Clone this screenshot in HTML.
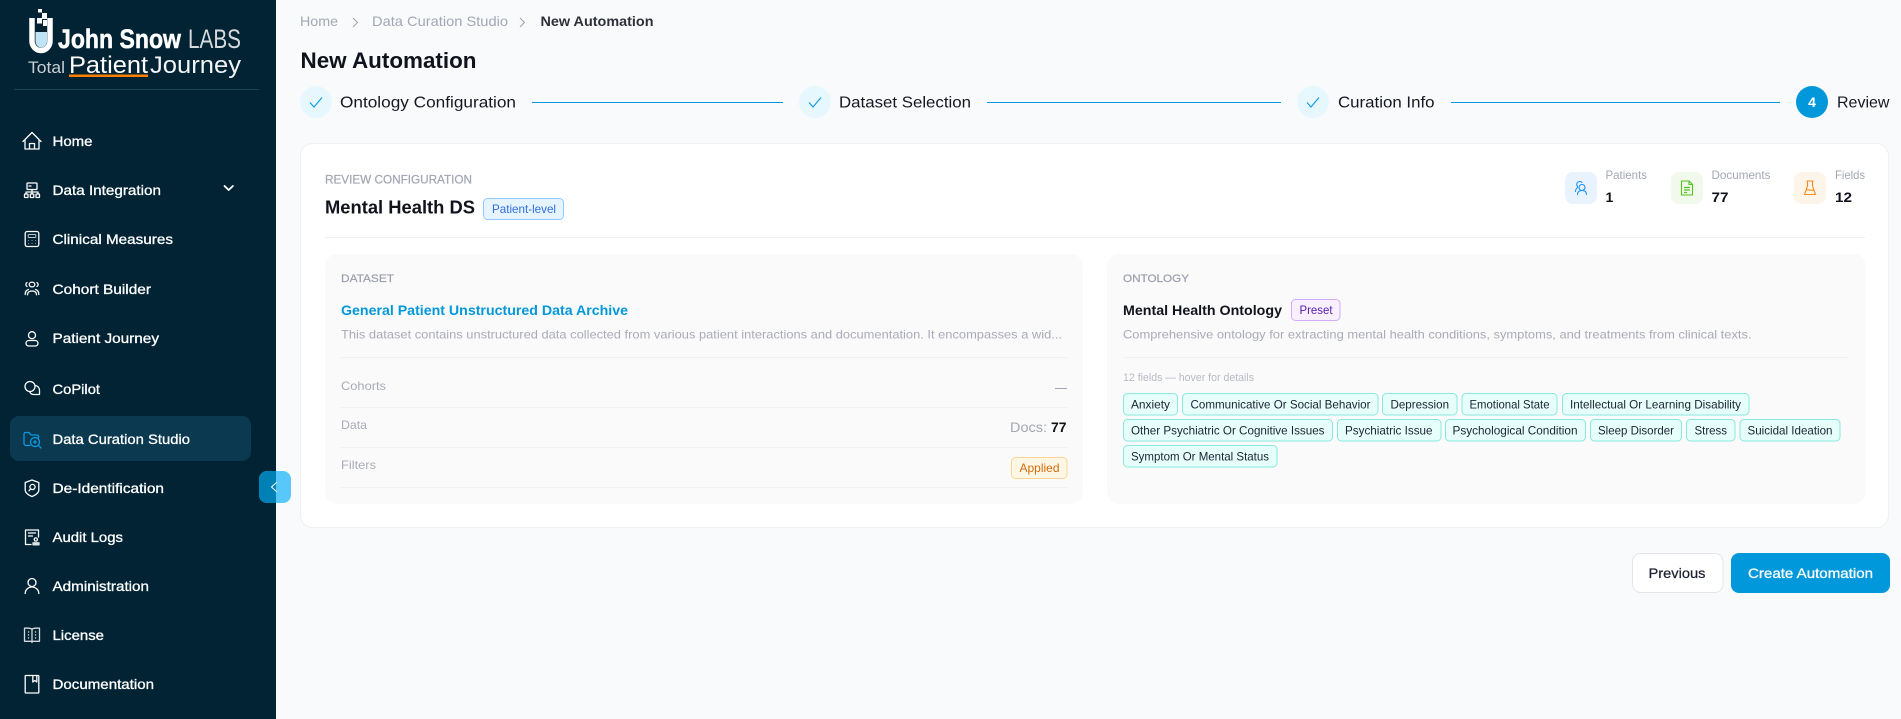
<!DOCTYPE html>
<html lang="en"><head><meta charset="utf-8"><title>New Automation</title>
<style>
html,body{margin:0;padding:0;background:#f9fafc;width:1901px;height:719px;overflow:hidden}
svg{display:block}
text{font-family:"Liberation Sans",Arial,sans-serif}
.nav{font-size:14px;fill:#fff;stroke:#fff;stroke-width:.3}
.ic{fill:none;stroke:#fff;stroke-width:1.3;stroke-linecap:round;stroke-linejoin:round}
.lab{font-size:11px;fill:#9a9eac;stroke:#9a9eac;stroke-width:.2}
.mut{font-size:12px;fill:#a9abb8}
.chip rect{fill:#e6fffb;stroke:#87e8de}
.chip text{font-size:12px;fill:#1c2333}
</style></head><body>
<svg xmlns="http://www.w3.org/2000/svg" width="1901" height="719" viewBox="0 0 1901 719">
<rect width="1901" height="719" fill="#f9fafc"/>
<!-- sidebar -->
<rect width="276" height="719" fill="#012333"/>
<g>
<path d="M35.500 32H47V41a5.700 6.500 0 0 1-11.500 0z" fill="#bfe2f5"/>
<path d="M32 18V41A9 9.500 0 0 0 50 41V18" fill="none" stroke="#fff" stroke-width="5.500"/>
<rect x="38" y="9" width="4" height="3.500" fill="#fff"/><rect x="42" y="13" width="5" height="6" fill="#fff"/><rect x="37" y="18" width="5" height="5.500" fill="#fff"/><rect x="43" y="20" width="4" height="6" fill="#fff"/>
<text x="58" y="48" font-size="27" font-weight="700" fill="#fff" stroke="#fff" stroke-width=".5" textLength="123" lengthAdjust="spacingAndGlyphs">John Snow</text>
<text x="188" y="48" font-size="27" fill="#d6dadc" textLength="53" lengthAdjust="spacingAndGlyphs">LABS</text>
<text x="28" y="73" font-size="17" fill="#c9ced1" textLength="37" lengthAdjust="spacingAndGlyphs">Total</text>
<text x="69" y="73" font-size="24" fill="#fff" textLength="79" lengthAdjust="spacingAndGlyphs">Patient</text>
<text x="150" y="73" font-size="24" fill="#f2f4f5" textLength="91" lengthAdjust="spacingAndGlyphs">Journey</text>
<rect x="69" y="74.500" width="79" height="2.500" fill="#ff8000"/>
</g>
<rect x="14" y="89" width="245" height="1" fill="#1c4256"/>
<rect x="10" y="416" width="241" height="45" rx="9" fill="#0b3950"/>

<text class="nav" x="52.500" y="146" textLength="40" lengthAdjust="spacingAndGlyphs">Home</text>
<text class="nav" x="52.500" y="195" textLength="108.500" lengthAdjust="spacingAndGlyphs">Data Integration</text>
<text class="nav" x="52.500" y="244" textLength="120.500" lengthAdjust="spacingAndGlyphs">Clinical Measures</text>
<text class="nav" x="52.500" y="294" textLength="98.500" lengthAdjust="spacingAndGlyphs">Cohort Builder</text>
<text class="nav" x="52.500" y="343" textLength="106.500" lengthAdjust="spacingAndGlyphs">Patient Journey</text>
<text class="nav" x="52.500" y="394" textLength="47.500" lengthAdjust="spacingAndGlyphs">CoPilot</text>
<text class="nav" x="52.500" y="444" textLength="137.500" lengthAdjust="spacingAndGlyphs">Data Curation Studio</text>
<text class="nav" x="52.500" y="493" textLength="111.500" lengthAdjust="spacingAndGlyphs">De-Identification</text>
<text class="nav" x="52.500" y="542" textLength="70.500" lengthAdjust="spacingAndGlyphs">Audit Logs</text>
<text class="nav" x="52.500" y="591" textLength="96.500" lengthAdjust="spacingAndGlyphs">Administration</text>
<text class="nav" x="52.500" y="640" textLength="51.500" lengthAdjust="spacingAndGlyphs">License</text>
<text class="nav" x="52.500" y="689" textLength="101.500" lengthAdjust="spacingAndGlyphs">Documentation</text>

<!-- nav icons -->
<g class="ic" transform="translate(32,141)"><path d="M-9 .5L0-8.500l9 9M-7-1.500V8H7V-1.500M-2.500 8V2.500h5V8"/></g>
<g class="ic" transform="translate(32,190)"><rect x="-5" y="-7" width="10" height="6.500" rx=".7"/><path d="M-3-4h2M0-.5V2M-6 4V2H6V4M0 2V4"/><rect x="-7.500" y="4" width="3.500" height="3.500" rx=".6"/><rect x="-1.700" y="4" width="3.500" height="3.500" rx=".6"/><rect x="4" y="4" width="3.500" height="3.500" rx=".6"/></g>
<g class="ic" transform="translate(32,239)"><rect x="-6.800" y="-7.500" width="13.600" height="15" rx="2"/><rect x="-3.800" y="-4.500" width="7.600" height="3" rx="1" stroke-width="1" opacity=".75"/><path d="M-3.500 1.500h.1M0 1.500h.1M3.500 1.500h.1M-3.500 4.500h.1M0 4.500h.1M3.500 4.500h.1" stroke-width="1" opacity=".6"/></g>
<g class="ic" transform="translate(32,289)"><ellipse cx="0" cy="-4.500" rx="2.800" ry="2.400"/><path d="M-6.800 5.500C-6.800 2.500-5.500 1-3.500 .5M6.800 5.500C6.800 2.500 5.500 1 3.500 .5M-4.500 5.800C-4.500 3-2.500 2 0 2S4.500 3 4.500 5.800M-5-6.500C-6.500-5.500-6.500-3.500-5-2.500M5-6.500C6.500-5.500 6.500-3.500 5-2.500"/></g>
<g class="ic" transform="translate(32,339)"><circle cx="0" cy="-3.800" r="3.500"/><rect x="-6" y="1.500" width="12" height="5.500" rx="2.700"/></g>
<g class="ic" transform="translate(32,389)"><circle cx="-2" cy="-2.500" r="5"/><path d="M3.200-3.500A4.800 4.800 0 0 1 7.500 1V5.500H2.500A5 5 0 0 1-2.500 2.500"/></g>
<g class="ic" transform="translate(32,439)" style="stroke:#0a9be0"><path d="M-2 6.500H-6a2 2 0 0 1-2-2V-5a1.500 1.500 0 0 1 1.500-1.500H-3L-1-4H5a1.500 1.500 0 0 1 1.500 1.500V-1"/><circle cx="3" cy="3" r="4.500"/><path d="M6.300 6.300L9 9M1.500 3h3M3 1.500v3"/></g>
<g class="ic" transform="translate(32,488)"><path d="M-6.800-5.500L0-8l6.800 2.500V2C6.800 5 3 7.500 0 8.500-3 7.500-6.800 5-6.800 2z"/><circle cx=".5" cy="-1" r="2.600"/><path d="M-1.500 1L-3 2.800"/></g>
<g class="ic" transform="translate(32,537)"><path d="M-1 7.500H-6.500V-7H6.500V0" /><path d="M-3.500-4H3.500M-3.500-1H.5"/><circle cx="3.800" cy="2.500" r="1.600"/><path d="M1 7.800V5.800H7V7.800z" fill="#dfe3e6" stroke="#dfe3e6"/></g>
<g class="ic" transform="translate(32,586)"><circle cx="0" cy="-3.500" r="4"/><path d="M-6.800 7.500C-6.800 3.500-3.500 1-.1 1S6.800 3.500 6.800 7.500"/></g>
<g class="ic" transform="translate(32,635)" style="stroke:#d3d9dc"><path d="M0-6V7.500M0-6C-2-7-5.500-7-7.500-6.800V6.300H-1L0 6.800 1 6.300H7.500V-6.800C5.500-7 2-7 0-6z"/><path d="M-3.500-3h.1M-3.500 0h.1M-3.500 3h.1M3.500-3h.1M3.500 0h.1M3.500 3h.1" stroke-width="1.400"/></g>
<g class="ic" transform="translate(32,684)"><rect x="-6.800" y="-8.500" width="13.600" height="17.500" rx=".5"/><path d="M.8-8.500V-2L2.800-3.500 4.800-2V-8.500"/></g>
<path d="M224.500 186l4.200 4 4.200-4" fill="none" stroke="#fff" stroke-width="1.800" stroke-linecap="round" stroke-linejoin="round"/>

<!-- collapse button -->
<rect x="259" y="471" width="32" height="32" rx="8" fill="#58c8fb"/>
<path d="M276 471H267a8 8 0 0 0-8 8V495a8 8 0 0 0 8 8H276z" fill="#0081b6"/>
<path d="M277 482l-5.500 5 5.500 5" fill="none" stroke="#fff" stroke-width="1"/>

<!-- header -->
<text x="300" y="26" font-size="14" fill="#a3a7b4" textLength="38" lengthAdjust="spacingAndGlyphs">Home</text>
<path d="M353 18l4.500 4.500-4.500 4.500" fill="none" stroke="#a3a7b4" stroke-width="1.100"/>
<text x="372" y="26" font-size="14" fill="#a3a7b4" textLength="136" lengthAdjust="spacingAndGlyphs">Data Curation Studio</text>
<path d="M520 18l4.500 4.500-4.500 4.500" fill="none" stroke="#a3a7b4" stroke-width="1.100"/>
<text x="540.500" y="26" font-size="14" font-weight="700" fill="#2e3038" textLength="113" lengthAdjust="spacingAndGlyphs">New Automation</text>
<text x="300.500" y="68" font-size="22" font-weight="700" fill="#11131c" textLength="176" lengthAdjust="spacingAndGlyphs">New Automation</text>

<!-- steps -->
<g fill="#e6f8fe"><circle cx="316" cy="102" r="16"/><circle cx="815" cy="102" r="16"/><circle cx="1313" cy="102" r="16"/></g>
<g fill="none" stroke="#0a9be0" stroke-width="1.100"><path d="M310 102.500l4 4.500 8-9.500M809 102.500l4 4.500 8-9.500M1307 102.500l4 4.500 8-9.500"/></g>
<g font-size="16" fill="#151722">
<text x="340" y="107.500" textLength="176" lengthAdjust="spacingAndGlyphs">Ontology Configuration</text>
<text x="839" y="107.500" textLength="132" lengthAdjust="spacingAndGlyphs">Dataset Selection</text>
<text x="1338" y="107.500" textLength="96.500" lengthAdjust="spacingAndGlyphs">Curation Info</text>
<text x="1837" y="107.500" textLength="52.500" lengthAdjust="spacingAndGlyphs">Review</text>
</g>
<g fill="#0098da"><rect x="532" y="102" width="251" height="1"/><rect x="987" y="102" width="294" height="1"/><rect x="1451" y="102" width="329" height="1"/><circle cx="1812" cy="102" r="16"/></g>
<text x="1812" y="107" font-size="14" font-weight="700" fill="#fff" text-anchor="middle">4</text>

<!-- card -->
<rect x="300.500" y="143.500" width="1588" height="384" rx="12" fill="#fff" stroke="#eff0f4"/>
<text x="325" y="183.500" font-size="12" fill="#a3a7b4" stroke="#a3a7b4" stroke-width=".25" textLength="147" lengthAdjust="spacingAndGlyphs">REVIEW CONFIGURATION</text>
<text x="325" y="213.500" font-size="18" font-weight="700" fill="#11131c" textLength="150" lengthAdjust="spacingAndGlyphs">Mental Health DS</text>
<rect x="483.500" y="198.500" width="80" height="21" rx="4" fill="#e6f4ff" stroke="#91caff"/>
<text x="492" y="213" font-size="12" fill="#2f6fde" textLength="64" lengthAdjust="spacingAndGlyphs">Patient-level</text>
<rect x="325" y="237" width="1540" height="1" fill="#f0f0f2"/>

<!-- stats -->
<rect x="1565" y="172" width="32" height="32" rx="8" fill="#e8f3ff"/>
<g fill="none" stroke="#1890ff" stroke-width="1.100" stroke-linecap="round" transform="translate(1581,188)"><circle cx="1" cy="-.5" r="3"/><path d="M-3.500-1.500A3 3 0 1 1 1-5.500"/><path d="M-3.500 6.500C-3.500 3.500-1.500 2.500 1 2.500S5.500 3.500 5.500 6.500M-5.500 3.500C-5.500 1.500-4.700.5-3.500-.5"/></g>
<rect x="1671" y="172" width="32" height="32" rx="8" fill="#f1f9ec"/>
<g fill="none" stroke="#52c41a" stroke-width="1.100" transform="translate(1687,188)"><path d="M-5.500-7H2L5.500-3.500V7H-5.500z"/><path d="M2-7V-3.500H5.500"/><path d="M-3-.5H3M-3 2H3M-3 4.500H0" stroke-width="1.300"/></g>
<rect x="1794" y="172" width="32" height="32" rx="8" fill="#fdf4ea"/>
<g fill="none" stroke="#fa8c16" stroke-width="1.100" transform="translate(1810,188)"><path d="M-3.500-7H3.500M-2.500-7V-2L-5.500 6.500H5.500L2.500-2V-7M-4 2C-2 1 0 3 3.800 2"/></g>
<g font-size="12" fill="#a3a7b4">
<text x="1605.500" y="179" textLength="41.500" lengthAdjust="spacingAndGlyphs">Patients</text>
<text x="1711.500" y="179" textLength="59" lengthAdjust="spacingAndGlyphs">Documents</text>
<text x="1835" y="179" textLength="30" lengthAdjust="spacingAndGlyphs">Fields</text>
</g>
<g font-size="14" font-weight="700" fill="#11131c">
<text x="1605.500" y="202">1</text><text x="1711.500" y="202" textLength="17" lengthAdjust="spacingAndGlyphs">77</text><text x="1835" y="202" textLength="17" lengthAdjust="spacingAndGlyphs">12</text>
</g>

<!-- dataset panel -->
<rect x="325" y="254" width="758" height="250" rx="12" fill="#fafafa"/>
<text class="lab" x="341" y="282" textLength="53" lengthAdjust="spacingAndGlyphs">DATASET</text>
<text x="341" y="315" font-size="14" font-weight="700" fill="#0098da" textLength="287" lengthAdjust="spacingAndGlyphs">General Patient Unstructured Data Archive</text>
<text class="mut" x="341" y="338.500" textLength="721" lengthAdjust="spacingAndGlyphs">This dataset contains unstructured data collected from various patient interactions and documentation. It encompasses a wid...</text>
<rect x="341" y="357" width="726" height="1" fill="#f0f0f2"/>
<text class="mut" x="341" y="390" textLength="45" lengthAdjust="spacingAndGlyphs">Cohorts</text>
<rect x="1055" y="388" width="12" height="1" fill="#a3a7b4"/>
<rect x="341" y="407" width="726" height="1" fill="#f0f0f2"/>
<text class="mut" x="341" y="429" textLength="26" lengthAdjust="spacingAndGlyphs">Data</text>
<text x="1010" y="432" font-size="14" fill="#a3a7b4" textLength="37" lengthAdjust="spacingAndGlyphs">Docs:</text>
<text x="1051" y="432" font-size="14" font-weight="700" fill="#11131c" textLength="15.500" lengthAdjust="spacingAndGlyphs">77</text>
<rect x="341" y="447" width="726" height="1" fill="#f0f0f2"/>
<text class="mut" x="341" y="469" textLength="35" lengthAdjust="spacingAndGlyphs">Filters</text>
<rect x="1011.500" y="457.500" width="55.500" height="21" rx="4" fill="#fff7e6" stroke="#ffd591"/>
<text x="1019.500" y="472" font-size="12" fill="#d46b08" textLength="40" lengthAdjust="spacingAndGlyphs">Applied</text>
<rect x="341" y="487" width="726" height="1" fill="#f0f0f2"/>

<!-- ontology panel -->
<rect x="1107" y="254" width="758.500" height="250" rx="12" fill="#fafafa"/>
<text class="lab" x="1123" y="282" textLength="66" lengthAdjust="spacingAndGlyphs">ONTOLOGY</text>
<text x="1123" y="315" font-size="14" font-weight="700" fill="#11131c" textLength="159" lengthAdjust="spacingAndGlyphs">Mental Health Ontology</text>
<rect x="1291.500" y="299.500" width="48.500" height="21" rx="4" fill="#f9f0ff" stroke="#d3adf7"/>
<text x="1299.500" y="314" font-size="12" fill="#531dab" textLength="33" lengthAdjust="spacingAndGlyphs">Preset</text>
<text class="mut" x="1123" y="338.500" textLength="628.500" lengthAdjust="spacingAndGlyphs">Comprehensive ontology for extracting mental health conditions, symptoms, and treatments from clinical texts.</text>
<rect x="1123" y="357" width="726" height="1" fill="#f0f0f2"/>
<text x="1123" y="381" font-size="11" fill="#b8bac5" textLength="131" lengthAdjust="spacingAndGlyphs">12 fields — hover for details</text>

<g class="chip">
<rect x="1123.500" y="393.500" width="54" height="21.500" rx="4"/><text x="1131" y="408.500" textLength="39" lengthAdjust="spacingAndGlyphs">Anxiety</text>
<rect x="1182.500" y="393.500" width="195.500" height="21.500" rx="4"/><text x="1190.500" y="408.500" textLength="180" lengthAdjust="spacingAndGlyphs">Communicative Or Social Behavior</text>
<rect x="1382.500" y="393.500" width="74.500" height="21.500" rx="4"/><text x="1390.500" y="408.500" textLength="58.500" lengthAdjust="spacingAndGlyphs">Depression</text>
<rect x="1462" y="393.500" width="95" height="21.500" rx="4"/><text x="1469.500" y="408.500" textLength="80" lengthAdjust="spacingAndGlyphs">Emotional State</text>
<rect x="1562.500" y="393.500" width="186.500" height="21.500" rx="4"/><text x="1570" y="408.500" textLength="171" lengthAdjust="spacingAndGlyphs">Intellectual Or Learning Disability</text>
<rect x="1123.500" y="419.500" width="209" height="21.500" rx="4"/><text x="1131" y="434.500" textLength="193.500" lengthAdjust="spacingAndGlyphs">Other Psychiatric Or Cognitive Issues</text>
<rect x="1337.500" y="419.500" width="103.500" height="21.500" rx="4"/><text x="1345" y="434.500" textLength="87.500" lengthAdjust="spacingAndGlyphs">Psychiatric Issue</text>
<rect x="1445.500" y="419.500" width="140" height="21.500" rx="4"/><text x="1452.500" y="434.500" textLength="125" lengthAdjust="spacingAndGlyphs">Psychological Condition</text>
<rect x="1590.500" y="419.500" width="91" height="21.500" rx="4"/><text x="1598" y="434.500" textLength="76" lengthAdjust="spacingAndGlyphs">Sleep Disorder</text>
<rect x="1686.500" y="419.500" width="48.500" height="21.500" rx="4"/><text x="1694.500" y="434.500" textLength="32.500" lengthAdjust="spacingAndGlyphs">Stress</text>
<rect x="1740" y="419.500" width="100" height="21.500" rx="4"/><text x="1747.500" y="434.500" textLength="85" lengthAdjust="spacingAndGlyphs">Suicidal Ideation</text>
<rect x="1123.500" y="445.500" width="153.500" height="21.500" rx="4"/><text x="1131" y="460.500" textLength="138" lengthAdjust="spacingAndGlyphs">Symptom Or Mental Status</text>
</g>

<!-- buttons -->
<rect x="1632.500" y="553.500" width="90.500" height="39" rx="8" fill="#fff" stroke="#e4e6ec"/>
<text x="1648.500" y="578" font-size="14" fill="#1c2030" stroke="#1c2030" stroke-width=".25" textLength="57" lengthAdjust="spacingAndGlyphs">Previous</text>
<rect x="1731" y="553" width="159" height="40" rx="8" fill="#0098da"/>
<text x="1748" y="578" font-size="14" fill="#fff" stroke="#fff" stroke-width=".3" textLength="125" lengthAdjust="spacingAndGlyphs">Create Automation</text>
</svg>
</body></html>
